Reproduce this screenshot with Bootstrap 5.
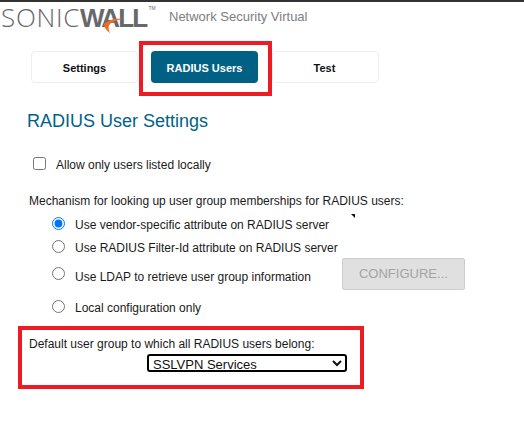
<!DOCTYPE html>
<html lang="en">
<head>
  <meta charset="UTF-8">
  <meta name="viewport" content="width=device-width, initial-scale=1.0">
  <title>RADIUS Users</title>
  <link href="https://cdn.jsdelivr.net/npm/bootstrap@5.3.0/dist/css/bootstrap.min.css" rel="stylesheet">
  <style>
    body {
      font-family: "Liberation Sans", Arial, sans-serif;
      font-size: 12px;
      color: #1a1a1a;
      background: #fff;
      border-top: 2px solid #333;
      height: 423px;
      overflow: hidden;
    }
    .sw-head { height: 39px; padding-left: 1px; }
    .sw-logo {
      position: relative;
      font-size: 26px;
      line-height: 30px;
      height: 30px;
      color: #67686b;
      width: 168px;
    }
    .sw-logo .thin { font-family: "Open Sans", sans-serif; font-weight: 300; letter-spacing: .7px; }
    .sw-logo .bold { font-family: "Liberation Sans", sans-serif; font-weight: 700; letter-spacing: -1.8px; }
    .sw-logo sup { font-size: 5px; top: -17px; left: 2px; }
    .sw-swoosh { position: absolute; left: 101px; top: 16px; }
    .sw-product { color: #7d7d7d; font-size: 13px; margin-top: 5px; }
    .tab-row { padding-left: 31px; }
    .tab-box {
      width: 107px;
      height: 32px;
      border-radius: 4px;
      font-size: 11px;
      font-weight: 700;
      color: #111;
      padding: 2px 0 0;
      margin-top: 10px;
    }
    .tab-off { border: 1px solid #eee; background: #fff; }
    .tab-on, .tab-on:hover { background: #006185; color: #fff; border: 0; margin-top: 6px; }
    .tab-last { padding-right: 2px; }
    .tab-frame {
      border: 4px solid #ed1c24;
      width: 133px;
      height: 55px;
      padding-left: 8px;
    }
    .tab-gap { margin-right: 1px; }
    .page-title {
      color: #00628a;
      font-size: 18px;
      font-weight: 400;
      margin: 15px 0 0 27px;
      line-height: 21px;
    }
    .local-row { margin: 25px 0 0 33px; height: 16px; }
    .local-row input {
      width: 13px; height: 13px; margin: 0 10px 4px 0;
    }
    .mech-label { margin: 21px 0 0 29px; line-height: 14px; }
    .radio-line { margin-left: 52px; }
    .radio-line input { width: 13px; height: 13px; margin: 0 10px 3px 0; flex: none; }
    .line-a { margin-top: 9px; height: 16px; }
    .line-b { margin-top: 7px; height: 16px; }
    .line-c { margin-top: 2px; height: 32px; }
    .line-c input { margin-bottom: 2px; }
    .line-c label { padding-top: 6px; }
    .line-d { margin-top: 10px; height: 16px; }
    .line-d input { margin-bottom: 4px; }
    .cfg-btn {
      width: 123px;
      height: 32px;
      margin-left: 31px;
      background: #e0e0e0;
      border: 1px solid #ccc;
      border-radius: 2px;
      color: #a3a3a3;
      font-size: 13px;
      padding: 0;
    }
    .tick {
      position: absolute;
      left: 351px; top: 214px;
      width: 0; height: 0;
      border-top: 4px solid #111;
      border-left: 4px solid transparent;
    }
    .group-frame {
      border: 4px solid #ed1c24;
      margin: 10px 0 0 18px;
      width: 346px;
      height: 63px;
      padding: 5px 0 0 7px;
    }
    .group-frame select {
      display: block;
      margin: 1px 0 0 118px;
      width: 200px;
      height: 18px;
      border: 2px solid #000;
      border-radius: 3px;
      background-color: #fff;
      color: #111;
      font-family: "Liberation Sans", Arial, sans-serif;
      font-size: 13px;
      padding: 0;
    }
  </style>
</head>
<body>
  <!-- Header -->
  <div class="sw-head d-flex align-items-start">
    <div class="sw-logo text-nowrap">
      <span class="thin">SONIC</span><span class="bold">WALL</span><sup>TM</sup>
      <svg class="sw-swoosh" width="22" height="16" viewBox="0 0 22 16"><path d="M21 1C14 0 6 2 2 6c0 3 3 7 6 9-2-4-2-7 0-9 3-3 8-4 13-5z" fill="#f26b21"/></svg>
    </div>
    <div class="sw-product ms-0">Network Security Virtual</div>
  </div>

  <!-- Tabs -->
  <div class="tab-row d-flex align-items-start">
    <button class="btn tab-box tab-off tab-gap" type="button">Settings</button>
    <div class="tab-frame d-flex align-items-start">
      <button class="btn tab-box tab-on" type="button">RADIUS Users</button>
    </div>
    <button class="btn tab-box tab-off tab-last" type="button">Test</button>
  </div>

  <h1 class="page-title">RADIUS User Settings</h1>

  <div class="local-row d-flex align-items-center">
    <input type="checkbox" id="localOnly">
    <label for="localOnly">Allow only users listed locally</label>
  </div>

  <div class="mech-label">Mechanism for looking up user group memberships for RADIUS users:</div>
  <div class="radio-line line-a d-flex align-items-center">
    <input type="radio" name="mech" id="m1" checked><label for="m1">Use vendor-specific attribute on RADIUS server</label>
  </div>
  <span class="tick"></span>
  <div class="radio-line line-b d-flex align-items-center">
    <input type="radio" name="mech" id="m2"><label for="m2">Use RADIUS Filter-Id attribute on RADIUS server</label>
  </div>
  <div class="radio-line line-c d-flex align-items-center">
    <input type="radio" name="mech" id="m3"><label for="m3">Use LDAP to retrieve user group information</label>
    <button class="cfg-btn" type="button" disabled>CONFIGURE...</button>
  </div>
  <div class="radio-line line-d d-flex align-items-center">
    <input type="radio" name="mech" id="m4"><label for="m4">Local configuration only</label>
  </div>

  <div class="group-frame">
    <label for="grp" class="d-block">Default user group to which all RADIUS users belong:</label>
    <select id="grp"><option>SSLVPN Services</option></select>
  </div>

  <script src="https://cdn.jsdelivr.net/npm/bootstrap@5.3.0/dist/js/bootstrap.bundle.min.js"></script>
</body>
</html>
